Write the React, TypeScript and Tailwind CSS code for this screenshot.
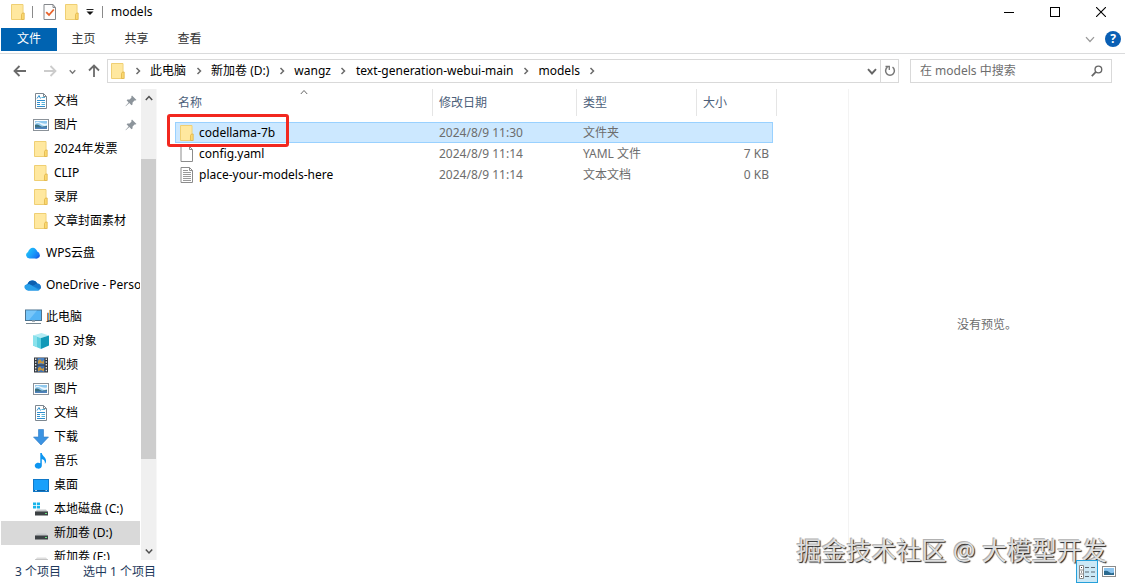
import { ReactNode } from "react";

function FolderIcon() {
  return (
    <svg width="14" height="16" viewBox="0 0 14 16" className="shrink-0" aria-hidden="true">
      <path d="M0.5 0.5H12V15.5H0.5Z" fill="#ffe594" stroke="#efcf73" />
      <path d="M1 1H11.5V9L9 15H1Z" fill="#ffeaa6" opacity="0.6" />
      <path d="M10.5 15.5V10.5L11.5 9H13.2V15.5Z" fill="#fbd96f" stroke="#dfb44a" strokeWidth="0.8" />
    </svg>
  );
}

function CheckDocIcon() {
  return (
    <svg width="14" height="16" viewBox="0 0 14 16" aria-hidden="true">
      <path d="M1 0.5H10L12.5 3.5V15.5H1Z" fill="#fdfdfd" stroke="#85888c" />
      <path d="M10 0.5V3.5H12.5" fill="none" stroke="#85888c" />
      <path d="M3.2 8.2L6 11L10.8 5.5" fill="none" stroke="#e8622a" strokeWidth="1.8" />
    </svg>
  );
}

function DocIcon() {
  return (
    <svg width="16" height="16" viewBox="0 0 16 16" className="shrink-0" aria-hidden="true">
      <path d="M2.5 0.5H10.5L13.5 3.5V15.5H2.5Z" fill="#fff" stroke="#7d8790" />
      <path d="M10.5 0.5V3.5H13.5" fill="none" stroke="#7d8790" />
      <path d="M4 5.5L6 2.5L7.5 5.5M4 7.5H12M4 9.5H7M4 11.5H7M4 13.5H12" fill="none" stroke="#2f8fce" />
      <path d="M8.5 4.5H12M8.5 9.5H12M8.5 11.5H12" fill="none" stroke="#55b2d9" />
    </svg>
  );
}

function PictureIcon() {
  return (
    <svg width="16" height="16" viewBox="0 0 16 16" className="shrink-0" aria-hidden="true">
      <rect x="0.5" y="2.5" width="15" height="11" fill="#fff" stroke="#8b9299" />
      <rect x="2" y="4" width="12" height="8" fill="#8fc8ee" />
      <path d="M2 7Q5 4.8 8 7.5T14 8V6.5Q10 7 7 5.5T2 6Z" fill="#eaf6fd" />
      <path d="M2 8Q4 6.8 6.5 8.5T10 9.5L14 9V12H2Z" fill="#3b6f7f" />
      <path d="M2 10.5L14 10V12H2Z" fill="#4f83bd" />
    </svg>
  );
}

function WpsIcon() {
  return (
    <svg width="16" height="16" viewBox="0 0 16 16" className="shrink-0" aria-hidden="true">
      <defs>
        <linearGradient id="wps" x1="0" y1="0.2" x2="1" y2="0.8">
          <stop offset="0" stopColor="#20c9f5" />
          <stop offset="0.5" stopColor="#1b9dfa" />
          <stop offset="1" stopColor="#1668ee" />
        </linearGradient>
      </defs>
      <path d="M4.5 13.5A3.5 3.5 0 0 1 3 6.9C4 4.5 6 2.5 8.3 2.8C10.5 3 11.5 5 12.3 6.6A3.6 3.6 0 0 1 12 13.5Z" fill="url(#wps)" />
      <path d="M10 13.5L15 9.5A3.6 3.6 0 0 1 12 13.5Z" fill="#1656e0" opacity="0.6" />
    </svg>
  );
}

function OneDriveIcon() {
  return (
    <svg width="18" height="16" viewBox="0 0 18 16" className="shrink-0" aria-hidden="true">
      <path d="M4 13.5A3.6 3.6 0 0 1 3.6 6.700A5.2 5.2 0 0 1 13.2 6.500A3.6 3.6 0 0 1 14 13.5Z" fill="#1a86d9" />
      <path d="M3.6 6.700A5.2 5.2 0 0 1 13.2 6.5L9 8.8Z" fill="#0b5fb0" />
      <path d="M4 13.5A3.6 3.6 0 0 1 1 8L5.5 7.3L15.5 13.3L14 13.5Z" fill="#2aa0ea" />
      <path d="M9 9L13.2 6.5A3.6 3.6 0 0 1 16.5 12Z" fill="#1577cc" />
    </svg>
  );
}

function ComputerIcon() {
  return (
    <svg width="17" height="16" viewBox="0 0 17 16" className="shrink-0" aria-hidden="true">
      <rect x="0.5" y="1" width="16" height="10.5" fill="#54b4f5" stroke="#4b7390" />
      <path d="M1 1.5H12L4 11H1Z" fill="#86cdfb" opacity="0.7" />
      <path d="M7 11.5H10V13H7Z" fill="#aab3ba" />
      <path d="M1 14.5H16" stroke="#768791" />
    </svg>
  );
}

function CubeIcon() {
  return (
    <svg width="16" height="16" viewBox="0 0 16 16" className="shrink-0" aria-hidden="true">
      <path d="M0 2.5L8.5 0L16 2.5L8 5Z" fill="#b4ecf4" />
      <path d="M0 2.5L8 5V16L0 12.5Z" fill="#5ccfdf" />
      <path d="M16 2.5L8 5V16L16 12.5Z" fill="#139ab8" />
      <path d="M0 2.5L4 3.8V14.3L0 12.5Z" fill="#8ae2ec" />
    </svg>
  );
}

function VideoIcon() {
  return (
    <svg width="16" height="16" viewBox="0 0 16 16" className="shrink-0" aria-hidden="true">
      <rect x="1" y="0.5" width="14" height="15" fill="#33373c" />
      <rect x="4.5" y="1" width="7" height="6.5" fill="#4a82c4" />
      <rect x="4.5" y="8.5" width="7" height="6.5" fill="#3d6fb0" />
      <path d="M5 4L7 2L9 5L11 3V7L8 6L5 7ZM5 11L7 9.500L9 12L11 10.500V14.500L8 13L5 14.500Z" fill="#c9963c" />
      <path d="M2.7 1.5V15M13.3 1.5V15" stroke="#e9edf0" strokeWidth="1.3" strokeDasharray="1.5 1.3" />
    </svg>
  );
}

function DownloadIcon() {
  return (
    <svg width="16" height="16" viewBox="0 0 16 16" className="shrink-0" aria-hidden="true">
      <path d="M5.5 0.5H10.5V8H15.5L8 16L0.5 8H5.5Z" fill="#3b93e2" stroke="#2b78c5" strokeWidth="0.6" />
    </svg>
  );
}

function MusicIcon() {
  return (
    <svg width="16" height="16" viewBox="0 0 16 16" className="shrink-0" aria-hidden="true">
      <path d="M7.3 0H8.8C9.3 3.5 13.5 4.2 13 8.5C12.9 9.5 12.3 10.5 11.8 11C12.4 7.5 10.5 6.5 8.800 6V12.5A3.5 3 0 1 1 7.3 10.2Z" fill="#0d95f0" />
    </svg>
  );
}

function DesktopIcon() {
  return (
    <svg width="16" height="16" viewBox="0 0 16 16" className="shrink-0" aria-hidden="true">
      <rect x="0.5" y="2.5" width="15" height="12" fill="#18a0fb" stroke="#0f78c8" />
      <path d="M1 13.5H15" stroke="#0b5e9f" />
      <path d="M2 13.5H4M12.5 13.5H14" stroke="#d6edfc" strokeWidth="0.8" />
    </svg>
  );
}

function DriveIcon({ windows = false, light = false }: { windows?: boolean; light?: boolean }) {
  return (
    <svg width="16" height="16" viewBox="0 0 16 16" className="shrink-0" aria-hidden="true">
      {windows && <path d="M0 1.5H3V4H0ZM3.8 1.5H7V4H3.8ZM0 4.8H3V7.5H0ZM3.8 4.8H7V7.5H3.8Z" fill="#18b4ea" />}
      <path d="M4 8.5H13L15 11H2Z" fill={light ? "#dedede" : "#c4c7c9"} />
      <rect x="2" y="10.5" width="13" height="4" fill={light ? "#aaaaaa" : "#3c4144"} />
      <rect x="12" y="12" width="2" height="1" fill="#63e07c" />
    </svg>
  );
}

function PinIcon() {
  return (
    <svg width="12" height="12" viewBox="0 0 12 12" className="shrink-0" aria-hidden="true">
      <path d="M7 0.5L11.5 5L10.3 5.6L9.5 5.5L7.6 7.4L7.5 9.5L6.5 10.3L4.3 8L0.8 11.2L0.5 11L3.6 7.4L1.6 5.2L2.5 4.4L4.6 4.4L6.5 2.5L6.3 1.5Z" fill="#8c949b" />
    </svg>
  );
}

function PageIcon({ lines = false }: { lines?: boolean }) {
  return (
    <svg width="14" height="16" viewBox="0 0 14 16" className="shrink-0" aria-hidden="true">
      <path d="M1 0.5H9.5L12.5 3.5V15.5H1Z" fill="#fff" stroke="#8c8c8c" />
      <path d="M9.5 0.5V3.5H12.5" fill="none" stroke="#8c8c8c" />
      {lines && <path d="M3 3.5H8M3 5.5H11M3 7.5H11M3 9.5H11M3 11.5H11M3 13.5H11" stroke="#9a9a9a" />}
    </svg>
  );
}

type Dir = "up" | "down" | "right";
function Chevron({ dir, size = 8, color = "#6b6b6b", weight = 1.5 }: { dir: Dir; size?: number; color?: string; weight?: number }) {
  const d = { up: "M0.8 6L4 2.5L7.2 6", down: "M0.8 2.5L4 6L7.2 2.5", right: "M2.5 1L5.5 4L2.5 7" }[dir];
  return (
    <svg width={size} height={size} viewBox="0 0 8 8" className="shrink-0" aria-hidden="true">
      <path d={d} fill="none" stroke={color} strokeWidth={weight} />
    </svg>
  );
}

function Arrow({ dir, color }: { dir: "left" | "right" | "up"; color: string }) {
  const d = {
    left: "M13 7H1.5M6.5 2L1.5 7L6.5 12",
    right: "M1 7H12.5M7.5 2L12.5 7L7.5 12",
    up: "M7 13V1.5M2 6.5L7 1.5L12 6.5",
  }[dir];
  return (
    <svg width="14" height="14" viewBox="0 0 14 14" aria-hidden="true">
      <path d={d} fill="none" stroke={color} strokeWidth="1.8" />
    </svg>
  );
}

type NavItem = { icon: ReactNode; label: string; pinned?: boolean; selected?: boolean };

const quickAccess: NavItem[] = [
  { icon: <DocIcon />, label: "文档", pinned: true },
  { icon: <PictureIcon />, label: "图片", pinned: true },
  { icon: <FolderIcon />, label: "2024年发票" },
  { icon: <FolderIcon />, label: "CLIP" },
  { icon: <FolderIcon />, label: "录屏" },
  { icon: <FolderIcon />, label: "文章封面素材" },
];

const thisPc: NavItem[] = [
  { icon: <CubeIcon />, label: "3D 对象" },
  { icon: <VideoIcon />, label: "视频" },
  { icon: <PictureIcon />, label: "图片" },
  { icon: <DocIcon />, label: "文档" },
  { icon: <DownloadIcon />, label: "下载" },
  { icon: <MusicIcon />, label: "音乐" },
  { icon: <DesktopIcon />, label: "桌面" },
  { icon: <DriveIcon windows />, label: "本地磁盘 (C:)" },
  { icon: <DriveIcon />, label: "新加卷 (D:)", selected: true },
  { icon: <DriveIcon light />, label: "新加卷 (F:)" },
];

function NavRow({ item, root = false }: { item: NavItem; root?: boolean }) {
  return (
    <li className={item.selected ? "bg-[#d9d9d9]" : ""}>
      <button type="button" className={`flex h-6 w-full items-center whitespace-nowrap text-left ${root ? "pl-[23px]" : "pl-[31px]"}`}>
        <span className="flex w-[18px] shrink-0 justify-center">{item.icon}</span>
        <span className="ml-1 grow">{item.label}</span>
        {item.pinned && <span className="mr-[3px]"><PinIcon /></span>}
      </button>
    </li>
  );
}

const crumbs = ["此电脑", "新加卷 (D:)", "wangz", "text-generation-webui-main", "models"];

const files = [
  { icon: <FolderIcon />, name: "codellama-7b", date: "2024/8/9 11:30", type: "文件夹", size: "", selected: true },
  { icon: <PageIcon />, name: "config.yaml", date: "2024/8/9 11:14", type: "YAML 文件", size: "7 KB" },
  { icon: <PageIcon lines />, name: "place-your-models-here", date: "2024/8/9 11:14", type: "文本文档", size: "0 KB" },
];

export default function App() {
  return (
    <div className="flex h-screen flex-col overflow-hidden bg-white font-['Noto_Sans','Noto_Sans_CJK_SC',sans-serif] text-[12px] leading-4 text-black">
      <header className="flex h-6 shrink-0 items-center pr-px">
        <div className="flex grow items-center pl-[11px]">
          <FolderIcon />
          <span className="mx-[7px] h-3 w-px bg-[#8a8a8a]" />
          <button type="button" aria-label="属性" className="ml-[3px]"><CheckDocIcon /></button>
          <button type="button" aria-label="新建文件夹" className="ml-2"><FolderIcon /></button>
          <button type="button" aria-label="自定义快速访问工具栏" className="ml-[7px]">
            <svg width="8" height="8" viewBox="0 0 8 8" aria-hidden="true">
              <path d="M0.5 1.5H7.5" stroke="#222" />
              <path d="M0.5 3.5H7.5L4 7Z" fill="#111" />
            </svg>
          </button>
          <span className="mx-2 h-3 w-px bg-[#8a8a8a]" />
          <h1>models</h1>
        </div>
        <button type="button" aria-label="最小化" className="flex w-[46px] justify-center">
          <svg width="10" height="10" viewBox="0 0 10 10"><path d="M0 5.5H10" stroke="#000" /></svg>
        </button>
        <button type="button" aria-label="最大化" className="flex w-[46px] justify-center">
          <svg width="10" height="10" viewBox="0 0 10 10"><rect x="0.5" y="0.5" width="9" height="9" fill="none" stroke="#000" /></svg>
        </button>
        <button type="button" aria-label="关闭" className="flex w-[46px] justify-center">
          <svg width="10" height="10" viewBox="0 0 10 10"><path d="M0 0L10 10M10 0L0 10" stroke="#000" strokeWidth="1.1" /></svg>
        </button>
      </header>

      <nav aria-label="功能区" className="flex h-[30px] shrink-0 items-center border-b border-[#dadbdc] pt-px pr-1 pl-px text-[#333]">
        <button type="button" className="h-[23px] w-14 bg-[#0063b1] text-white">文件</button>
        <button type="button" className="h-[23px] w-[53px]">主页</button>
        <button type="button" className="h-[23px] w-[53px]">共享</button>
        <button type="button" className="h-[23px] w-[53px]">查看</button>
        <span className="grow" />
        <button type="button" aria-label="展开功能区" className="mr-[10px]"><Chevron dir="down" size={10} color="#999" weight={1} /></button>
        <button type="button" aria-label="帮助" className="flex size-4 items-center justify-center rounded-full bg-[#0a5fb4] text-[12px] font-bold text-white">?</button>
      </nav>

      <div className="flex h-[34px] shrink-0 items-center pr-[13px]">
        <div className="flex w-[107px] shrink-0 items-center pl-[13px]">
          <button type="button" aria-label="后退"><Arrow dir="left" color="#6b6b6b" /></button>
          <button type="button" aria-label="前进" className="ml-4"><Arrow dir="right" color="#cccccc" /></button>
          <button type="button" aria-label="最近位置" className="ml-3"><Chevron dir="down" size={7} color="#777" /></button>
          <button type="button" aria-label="上移" className="ml-[11px]"><Arrow dir="up" color="#6b6b6b" /></button>
        </div>
        <div className="flex h-6 min-w-0 grow items-center border border-[#d9d9d9] pl-[3px]">
          <FolderIcon />
          {crumbs.map((c) => (
            <span key={c} className="flex items-center whitespace-nowrap">
              <span className="flex w-[25px] justify-center"><Chevron dir="right" /></span>
              <button type="button">{c}</button>
            </span>
          ))}
          <span className="flex w-[25px] justify-center"><Chevron dir="right" /></span>
          <span className="grow" />
          <button type="button" aria-label="以前的位置" className="mr-[3px]"><Chevron dir="down" size={10} color="#666" /></button>
          <button type="button" aria-label="刷新" className="flex h-full w-[18px] items-center justify-center border-l border-[#d9d9d9]">
            <svg width="12" height="12" viewBox="0 0 12 12" aria-hidden="true">
              <path d="M8.5 2.200A4.400 4.400 0 1 1 3.500 2.200" fill="none" stroke="#777" strokeWidth="1.500" />
              <path d="M1.500 1.500H5.300V5" fill="none" stroke="#777" strokeWidth="1.300" />
            </svg>
          </button>
        </div>
        <label className="ml-[11px] flex h-6 w-[202px] shrink-0 items-center border border-[#d9d9d9] pr-2 pl-[9px]">
          <input type="text" aria-label="搜索" placeholder="在 models 中搜索" className="min-w-0 grow outline-none placeholder:text-[#6d6d6d]" />
          <svg width="12" height="12" viewBox="0 0 12 12" aria-hidden="true">
            <circle cx="7.5" cy="4.5" r="3.4" fill="none" stroke="#666" strokeWidth="1.4" />
            <path d="M5 7L0.8 11.2" stroke="#666" strokeWidth="1.8" />
          </svg>
        </label>
      </div>

      <main className="flex min-h-0 grow pt-px">
        <aside className="flex w-[157px] shrink-0">
          <div className="min-w-0 grow overflow-hidden pl-px">
            <ul>{quickAccess.map((i) => <NavRow key={i.label} item={i} />)}</ul>
            <ul className="mt-2"><NavRow root item={{ icon: <WpsIcon />, label: "WPS云盘" }} /></ul>
            <ul className="mt-2"><NavRow root item={{ icon: <OneDriveIcon />, label: "OneDrive - Personal" }} /></ul>
            <ul className="mt-2">
              <NavRow root item={{ icon: <ComputerIcon />, label: "此电脑" }} />
              {thisPc.map((i) => <NavRow key={i.label} item={i} />)}
            </ul>
          </div>
          <div className="ml-px flex w-[15px] shrink-0 flex-col bg-[#f0f0f0]">
            <button type="button" aria-label="向上滚动" className="flex h-[18px] items-center justify-center"><Chevron dir="up" color="#505050" /></button>
            <div className="flex grow flex-col">
              <div className="basis-[12%]" />
              <div className="basis-[69%] bg-[#cdcdcd]" />
            </div>
            <button type="button" aria-label="向下滚动" className="flex h-[18px] items-center justify-center"><Chevron dir="down" color="#505050" /></button>
          </div>
          <div className="w-px shrink-0 bg-[#f7f7f7]" />
        </aside>

        <section aria-label="文件" className="relative min-w-0 grow pl-[18px]">
          <table className="w-[602px] table-fixed border-separate border-spacing-0 text-left">
            <colgroup>
              <col className="w-[258px]" />
              <col className="w-[144px]" />
              <col className="w-[120px]" />
              <col className="w-[76px]" />
              <col className="w-[4px]" />
            </colgroup>
            <thead className="text-[#4c607a]">
              <tr className="h-[27px]">
                <th className="relative border-r border-[#e5e5e5] pl-[3px] font-normal">
                  名称
                  <span className="absolute -top-px left-1/2 -translate-x-1/2"><Chevron dir="up" color="#666" weight={1} /></span>
                </th>
                <th className="border-r border-[#e5e5e5] pl-[6px] font-normal">修改日期</th>
                <th className="border-r border-[#e5e5e5] pl-[6px] font-normal">类型</th>
                <th colSpan={2} className="border-r border-[#e5e5e5] pl-[6px] font-normal">大小</th>
              </tr>
              <tr aria-hidden="true" className="h-[6px]"><td colSpan={5} /></tr>
            </thead>
            <tbody className="text-[#6d6d6d]">
              {files.map((f) => {
                const mid = f.selected ? "border-y border-[#99d1ff] bg-[#cce8ff]" : "";
                return (
                  <tr key={f.name} className="h-[21px]">
                    <td className={`text-black ${mid} ${f.selected ? "border-l pl-1" : "pl-[5px]"}`}>
                      <span className="flex items-center gap-[5px]">{f.icon}<span>{f.name}</span></span>
                    </td>
                    <td className={`pl-[6px] ${mid}`}>{f.date}</td>
                    <td className={`pl-[6px] ${mid}`}>{f.type}</td>
                    <td className={`pr-1 text-right ${mid} ${f.selected ? "border-r" : ""}`}>{f.size}</td>
                    <td />
                  </tr>
                );
              })}
            </tbody>
          </table>
          <div className="absolute top-[25px] left-[10px] h-[33px] w-[122px] rounded-[3px] border-[3px] border-[#f2281f]" />
        </section>

        <aside aria-label="预览" className="flex w-[277px] shrink-0 items-center justify-center border-l border-[#f3f3f3] text-[#6d6d6d]">
          没有预览。
        </aside>
      </main>

      <footer className="relative flex h-[23px] shrink-0 items-center pr-2 pl-[15px] text-[#1e395b]">
        <p className="absolute right-[18px] bottom-[13px] text-[25px] leading-[40px] whitespace-nowrap text-[#dedede] [text-shadow:1px_1px_1px_#222,-1px_-1px_0_#b0b0b0]">
          掘金技术社区 @ 大模型开发
        </p>
        <span>3 个项目</span>
        <span className="ml-[22px]">选中 1 个项目</span>
        <span className="grow" />
        <button type="button" aria-label="详细信息" className="relative flex h-full w-[22px] items-center justify-center border border-[#26a0da] bg-[#cbe8f6]">
          <svg width="16" height="14" viewBox="0 0 16 14" aria-hidden="true">
            <path d="M0.5 0.5H4.5V13.5H0.5ZM0.5 5H4.5M0.5 9H4.5" fill="#fff" stroke="#8b8b8b" />
            <path d="M2 2.5H3M2 7H3M2 11.5H3" stroke="#333" />
            <path d="M6 2.5H10M12 2.5H16M6 7H10M12 7H16M6 11.5H10M12 11.5H16" stroke="#5d6a75" />
          </svg>
        </button>
        <button type="button" aria-label="大缩略图" className="ml-[3px] flex w-4 justify-center">
          <svg width="14" height="12" viewBox="0 0 14 12" aria-hidden="true">
            <rect x="0.5" y="0.5" width="13" height="10" fill="#fff" stroke="#8b8b8b" />
            <rect x="2" y="2" width="10" height="7" fill="#8cc4ee" />
            <path d="M2 5Q5 4 7 6T12 6.5V9H2Z" fill="#2b6a8f" />
          </svg>
        </button>
      </footer>
    </div>
  );
}
